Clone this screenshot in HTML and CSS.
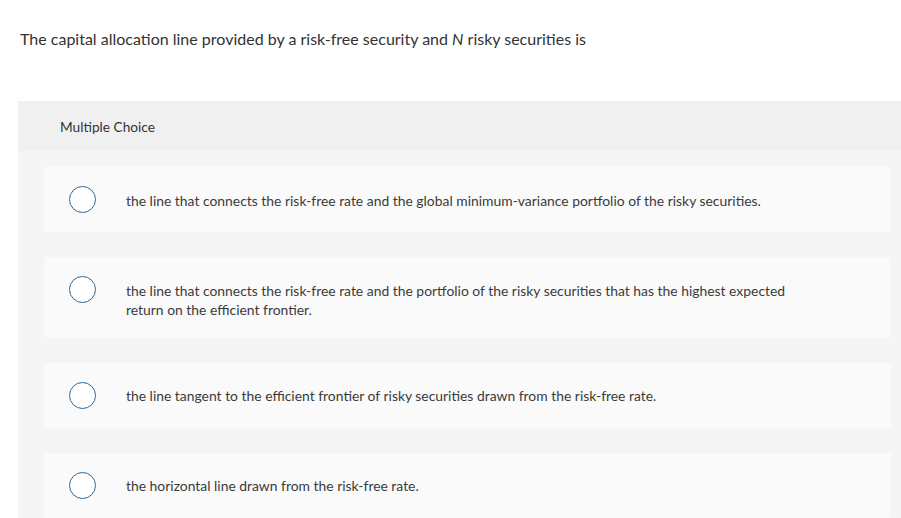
FILE: index.html
```html
<!DOCTYPE html>
<html>
<head>
<meta charset="utf-8">
<link rel="stylesheet" href="styles.css">
</head>
<body>
<p class="question">The capital allocation line provided by a risk-free security and <i>N</i> risky securities is</p>
<div class="mc">
  <div class="mc-header">Multiple Choice</div>
  <div class="mc-body">
    <div class="option"><span class="radio"></span><span class="label">the line that connects the risk-free rate and the global minimum-variance portfolio of the risky securities.</span></div>
    <div class="option"><span class="radio"></span><span class="label">the line that connects the risk-free rate and the portfolio of the risky securities that has the highest expected return on the efficient frontier.</span></div>
    <div class="option"><span class="radio"></span><span class="label">the line tangent to the efficient frontier of risky securities drawn from the risk-free rate.</span></div>
    <div class="option"><span class="radio"></span><span class="label">the horizontal line drawn from the risk-free rate.</span></div>
  </div>
</div>
</body>
</html>
```
FILE: styles.css
```css
html, body { margin: 0; padding: 0; background: #fff; overflow: hidden; }
body { font-family: "Lato", "Open Sans", sans-serif; color: #333; }
.question { margin: 0; padding: 29px 0 0 20px; font-size: 16px; line-height: 20px; height: 72px; }
.question i { font-style: italic; }
.mc { margin-left: 18px; background: #f5f5f5; }
.mc-header { background: #f0f0f0; height: 50px; padding-left: 42px; display: flex; align-items: center; font-size: 13.7px; color: #333; }
.mc-body { padding: 16px 10px 0 26px; display: flex; flex-direction: column; gap: 25px; }
.option { background: #fafafa; border-radius: 3px; display: flex; align-items: flex-start; padding: 19px 20px 19px 25px; }
.radio { flex: none; width: 25px; height: 25px; border: 1.5px solid #2b679e; border-radius: 50%; background: #fff; }
.label { margin-left: 30px; margin-top: 4.5px; font-size: 13.9px; line-height: 19px; color: #3a3a3a; max-width: 670px; }
```
